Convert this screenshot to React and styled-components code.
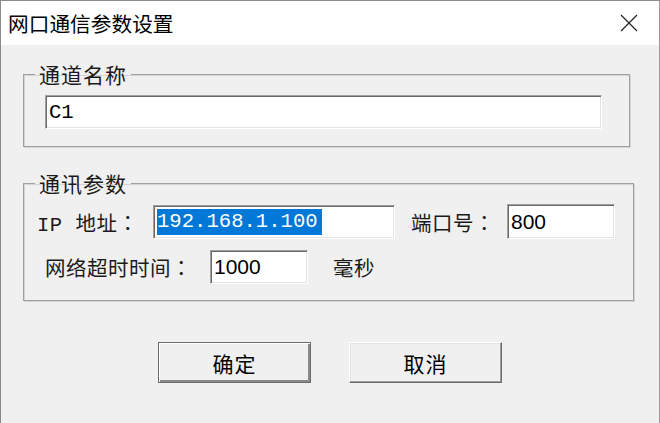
import React from "react";
import styled, { createGlobalStyle } from "styled-components";

const GlobalStyle = createGlobalStyle`
  html, body {
    margin: 0;
    padding: 0;
    background: #ffffff;
  }
`;

const CJK = `"Noto Sans CJK SC", "Noto Sans", sans-serif`;

const Window = styled.div`
  width: 660px;
  height: 423px;
  box-sizing: border-box;
  border-top: 1px solid #8a8a8a;
  border-left: 1px solid #8a8a8a;
  border-right: 1px solid #9a9a9a;
  display: flex;
  flex-direction: column;
  background: #f0f0f0;
  overflow: hidden;
`;

const TitleBar = styled.div`
  height: 44px;
  flex: none;
  background: #ffffff;
  display: flex;
  align-items: center;
  justify-content: space-between;
  padding: 0 21px 0 7px;
`;

const Title = styled.div`
  font-family: ${CJK};
  font-size: 20.7px;
  color: #000;
  line-height: 24px;
`;

const CloseIcon = styled.svg`
  width: 18px;
  height: 18px;
  display: block;
`;

const Body = styled.div`
  flex: 1;
  display: flex;
  flex-direction: column;
  padding: 17px 0 0 22px;
`;

const Group = styled.fieldset`
  margin: ${(p) => p.$top}px 0 0 0;
  width: ${(p) => p.$width}px;
  box-sizing: border-box;
  border: 1px solid #a0a0a0;
  box-shadow: inset 1px 1px 0 #d4d4d4, 1px 1px 0 #d4d4d4;
  padding: ${(p) => p.$pt}px 0 ${(p) => p.$pb}px 0;
  min-width: 0;
`;

const Legend = styled.legend`
  font-family: ${CJK};
  font-size: 21px;
  line-height: 24px;
  color: #1a1a1a;
  padding: 0 4px;
  margin-left: 11px;
  letter-spacing: 1px;
`;

const Row = styled.div`
  display: flex;
  align-items: center;
  padding-left: ${(p) => p.$indent}px;
  margin-top: ${(p) => p.$gap || 0}px;
`;

const Label = styled.span`
  font-family: ${(p) => (p.$mono ? `"Liberation Mono", ${CJK}` : CJK)};
  font-size: 20.5px;
  color: #1a1a1a;
  width: ${(p) => (p.$width ? `${p.$width}px` : "auto")};
  margin-left: ${(p) => p.$ml || 0}px;
  flex: none;
  white-space: pre;
  letter-spacing: 0.5px;
`;

const Colon = styled.span`
  font-family: "Noto Sans CJK TC", "Noto Sans CJK SC", sans-serif;
`;

const EditBox = styled.div`
  width: ${(p) => p.$width}px;
  height: ${(p) => p.$height}px;
  margin-left: ${(p) => p.$ml || 0}px;
  box-sizing: border-box;
  flex: none;
  background: #ffffff;
  border: 1px solid;
  border-color: #a0a0a0 #ffffff #ffffff #a0a0a0;
  box-shadow: inset 1px 1px 0 #696969, inset -1px -1px 0 #e3e3e3;
  display: flex;
  align-items: center;
  padding-left: 3px;
  font-family: ${(p) => (p.$mono ? `"Liberation Mono", monospace` : `"Liberation Sans", Arial, sans-serif`)};
  font-size: ${(p) => (p.$mono ? "20.6px" : "21px")};
  color: #000;
`;

const Selected = styled.span`
  background: #0078d7;
  color: #ffffff;
  line-height: 26px;
  padding-right: 4px;
`;

const ButtonRow = styled.div`
  display: flex;
  justify-content: center;
  gap: 38px;
  margin: 41px 22px 0 0;
`;

const Button = styled.button`
  width: 153px;
  height: 41px;
  box-sizing: border-box;
  background: #f0f0f0;
  font-family: ${CJK};
  font-size: 21px;
  color: #000;
  padding: 0;
  border: 1px solid;
  border-color: ${(p) => (p.$default ? "#6a6a6a" : "#ffffff #696969 #696969 #ffffff")};
  box-shadow: ${(p) =>
    p.$default
      ? "inset 1px 1px 0 #ffffff, inset -2px -2px 0 #8a8a8a"
      : "inset -1px -1px 0 #a0a0a0, inset 1px 1px 0 #e3e3e3"};
  letter-spacing: 1px;
`;

const App = () => {
  return (
    <>
      <GlobalStyle />
      <Window>
        <TitleBar>
          <Title>网口通信参数设置</Title>
          <CloseIcon viewBox="0 0 18 18">
            <path d="M1 1 L17 17 M17 1 L1 17" stroke="#222" strokeWidth="1.2" fill="none" />
          </CloseIcon>
        </TitleBar>
        <Body>
          <Group $top={0} $width={607} $pt={9} $pb={17}>
            <Legend>通道名称</Legend>
            <Row $indent={21}>
              <EditBox $width={557} $height={34} $mono>C1</EditBox>
            </Row>
          </Group>
          <Group $top={24} $width={611} $pt={9} $pb={16}>
            <Legend>通讯参数</Legend>
            <Row $indent={13}>
              <Label $width={116} $mono>IP 地址<Colon>：</Colon></Label>
              <EditBox $width={242} $height={34} $mono>
                <Selected>192.168.1.100</Selected>
              </EditBox>
              <Label $width={96} $ml={16}>端口号<Colon>：</Colon></Label>
              <EditBox $width={108} $height={35}>800</EditBox>
            </Row>
            <Row $indent={21} $gap={11}>
              <Label $width={165}>网络超时时间<Colon>：</Colon></Label>
              <EditBox $width={98} $height={34}>1000</EditBox>
              <Label $ml={25}>毫秒</Label>
            </Row>
          </Group>
          <ButtonRow>
            <Button $default>确定</Button>
            <Button>取消</Button>
          </ButtonRow>
        </Body>
      </Window>
    </>
  );
};

export default App;
